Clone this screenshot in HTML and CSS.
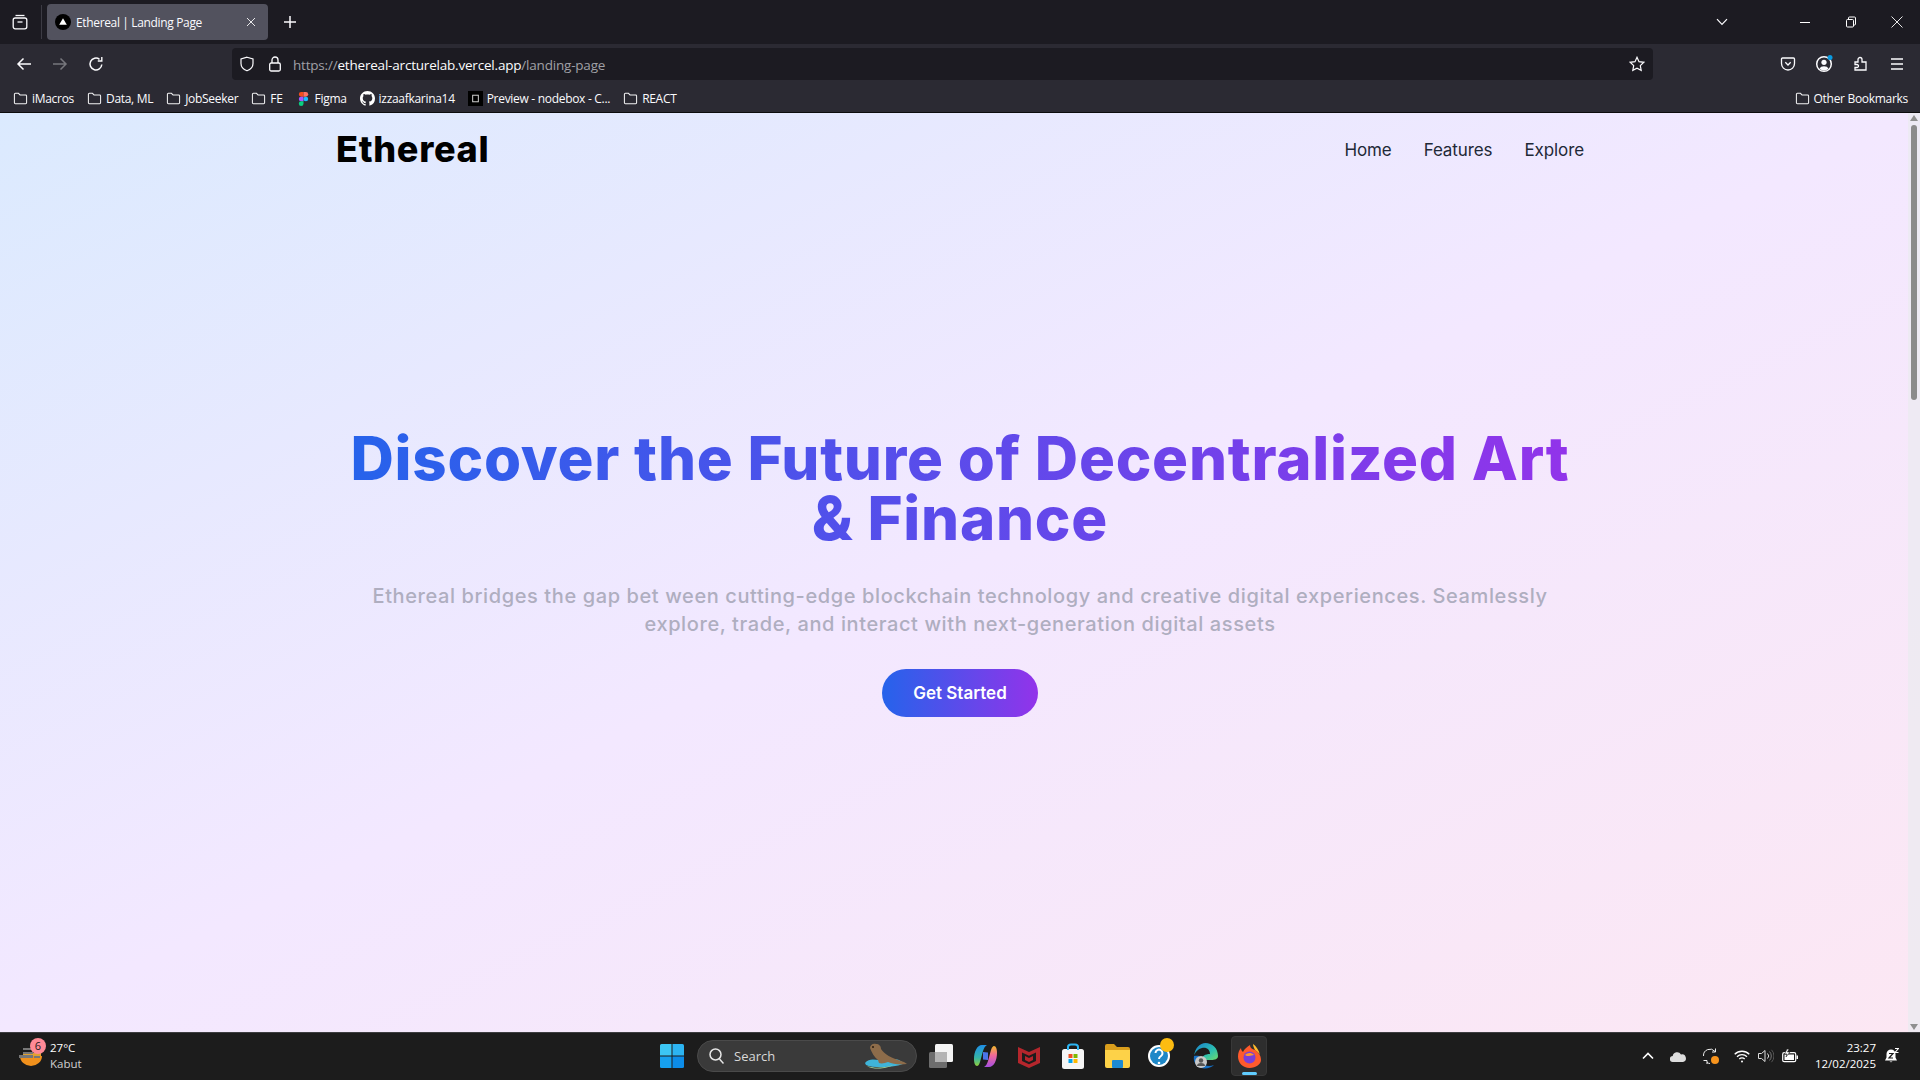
FILE: index.html
```html
<!DOCTYPE html>
<html lang="en">
<head>
    <meta charset="UTF-8">
    <meta name="viewport" content="width=device-width, initial-scale=1.0">
    <title>Ethereal | Landing Page</title>
    <link rel="stylesheet" href="styles.css">
</head>
<body>

<svg class="sprite" xmlns="http://www.w3.org/2000/svg">
    <symbol id="folder" viewBox="0 0 16 16">
        <path d="M1.5 3.5a1 1 0 0 1 1-1h3.3l1.7 1.7h6a1 1 0 0 1 1 1v7.3a1 1 0 0 1-1 1h-11a1 1 0 0 1-1-1z" fill="none" stroke="#f2f2f4" stroke-width="1.1"/>
    </symbol>
    <linearGradient id="copilotLeft" x1="0" y1="0" x2="0" y2="1">
        <stop offset="0" stop-color="#1f8fe8"/>
        <stop offset="0.6" stop-color="#35b5a8"/>
        <stop offset="1" stop-color="#8fd03c"/>
    </linearGradient>
    <linearGradient id="copilotRight" x1="0" y1="0" x2="0" y2="1">
        <stop offset="0" stop-color="#f4b82c"/>
        <stop offset="0.45" stop-color="#f0689a"/>
        <stop offset="1" stop-color="#a64fe0"/>
    </linearGradient>
    <linearGradient id="edgeTop" x1="0" y1="0" x2="1" y2="1">
        <stop offset="0" stop-color="#1a7fd0"/>
        <stop offset="0.6" stop-color="#2cc0b0"/>
        <stop offset="1" stop-color="#6fdc6a"/>
    </linearGradient>
</svg>

<div class="browser">
    <!-- Tab strip -->
    <div class="tabstrip">
        <div class="tabs-all">
            <svg width="16" height="16" viewBox="0 0 16 16" fill="none" stroke="#fbfbfe" stroke-width="1.3"><path d="M3.5 1.5h9"/><rect x="1.2" y="4" width="13.6" height="10.8" rx="2"/><path d="M5.5 8h5"/></svg>
        </div>
        <div class="tab">
            <svg class="tab-icon" width="16" height="16" viewBox="0 0 16 16"><circle cx="8" cy="8" r="8" fill="#000"/><path d="M8 4.2l3.8 6.6H4.2z" fill="#fff"/></svg>
            <span class="tab-title">Ethereal | Landing Page</span>
            <svg class="tab-close" width="10" height="10" viewBox="0 0 10 10" stroke="#e8e8ea" stroke-width="1"><path d="M1 1l8 8M9 1l-8 8"/></svg>
        </div>
        <svg class="tab-new" width="14" height="14" viewBox="0 0 14 14" stroke="#fbfbfe" stroke-width="1.5"><path d="M7 1v12M1 7h12"/></svg>
        <svg class="tab-list" width="12" height="8" viewBox="0 0 12 8" fill="none" stroke="#fbfbfe" stroke-width="1.2"><path d="M1 1.2l5 5.3 5-5.3"/></svg>
        <div class="win-controls">
            <svg width="12" height="12" viewBox="0 0 12 12" stroke="#fff" stroke-width="1"><path d="M1 6.5h10"/></svg>
            <svg width="12" height="12" viewBox="0 0 12 12" fill="none" stroke="#fff" stroke-width="1"><rect x="1.5" y="3.5" width="7" height="7.5" rx="1"/><path d="M3.5 3.5V2a1 1 0 0 1 1-1h5a1 1 0 0 1 1 1v6a1 1 0 0 1-1 1H8.5"/></svg>
            <svg width="12" height="12" viewBox="0 0 12 12" stroke="#fff" stroke-width="0.9"><path d="M.5.5l11 11M11.5.5l-11 11"/></svg>
        </div>
    </div>

    <!-- Navigation bar -->
    <div class="navbar">
        <div class="nav-btns">
            <svg width="16" height="16" viewBox="0 0 16 16" fill="none" stroke="#fbfbfe" stroke-width="1.5"><path d="M15 8H2M7.5 2.5L2 8l5.5 5.5"/></svg>
            <svg width="16" height="16" viewBox="0 0 16 16" fill="none" stroke="#77777d" stroke-width="1.5"><path d="M1 8h13M8.5 2.5L14 8l-5.5 5.5"/></svg>
            <svg width="16" height="16" viewBox="0 0 16 16" fill="none" stroke="#fbfbfe" stroke-width="1.5"><path d="M13.8 8.5A5.9 5.9 0 1 1 11.5 3.3"/><path d="M13.8 1v4h-4" stroke-width="1.4"/></svg>
        </div>
        <div class="urlbar">
            <svg width="16" height="16" viewBox="0 0 16 16" fill="none" stroke="#fbfbfe" stroke-width="1.2"><path d="M8 1.2l6 1.8v4.5c0 3.5-2.5 6-6 7.3-3.5-1.3-6-3.8-6-7.3V3z"/></svg>
            <svg class="url-lock" width="14" height="16" viewBox="0 0 14 16" fill="none" stroke="#fbfbfe" stroke-width="1.3"><rect x="1.7" y="7" width="10.6" height="8" rx="1.5"/><path d="M4 7V4a3 3 0 0 1 6 0v3"/></svg>
            <span class="url-text"><span class="url-dim">https://</span>ethereal-arcturelab.vercel.app<span class="url-dim">/landing-page</span></span>
            <svg class="url-star" width="16" height="16" viewBox="0 0 16 16" fill="none" stroke="#fbfbfe" stroke-width="1.2"><path d="M8 1.3l2 4.4 4.8.6-3.5 3.3.9 4.8L8 12.1l-4.2 2.3.9-4.8-3.500-3.300L6 5.700z"/></svg>
        </div>
        <div class="tool-btns">
            <svg width="16" height="16" viewBox="0 0 16 16" fill="none" stroke="#fbfbfe" stroke-width="1.3"><path d="M2.5 2h11a1 1 0 0 1 1 1v4.5a6.5 6.5 0 0 1-13 0V3a1 1 0 0 1 1-1z"/><path d="M5.3 6.300L8 9l2.700-2.700"/></svg>
            <svg class="tool-profile" width="18" height="18" viewBox="0 0 18 18"><circle cx="9" cy="9" r="7.3" fill="none" stroke="#fbfbfe" stroke-width="1.5"/><circle cx="9" cy="7.3" r="2.6" fill="#fbfbfe"/><path d="M4.5 13.500a4.800 3.600 0 0 1 9 0 6 6 0 0 1-9 0z" fill="#fbfbfe"/><circle cx="15" cy="2.5" r="2.5" fill="#0a9ae0"/></svg>
            <svg width="16" height="16" viewBox="0 0 16 16" fill="none" stroke="#fbfbfe" stroke-width="1.3"><path d="M2 6h3V3.500a2 2 0 0 1 4 0V6h4v8H2v-2.500h2a1.500 1.500 0 0 0 0-3H2z"/></svg>
            <svg width="16" height="16" viewBox="0 0 16 16" stroke="#fbfbfe" stroke-width="1.3"><path d="M2 3h12M2 8h12M2 13h12"/></svg>
        </div>
    </div>

    <!-- Bookmarks -->
    <div class="bookmarks">
        <a class="bm"><svg class="bm-icon"><use href="#folder"/></svg>iMacros</a>
        <a class="bm"><svg class="bm-icon"><use href="#folder"/></svg>Data, ML</a>
        <a class="bm"><svg class="bm-icon"><use href="#folder"/></svg>JobSeeker</a>
        <a class="bm"><svg class="bm-icon"><use href="#folder"/></svg>FE</a>
        <a class="bm">
            <svg class="bm-icon" viewBox="0 0 16 16"><path d="M3 1h5v5H5.500a2.500 2.500 0 0 1 0-5z" fill="#f24e1e"/><path d="M8 1h2.500a2.500 2.500 0 0 1 0 5H8z" fill="#ff7262"/><path d="M8 6H5.500a2.500 2.500 0 0 0 0 5H8z" fill="#a259ff"/><circle cx="10.5" cy="8.5" r="2.5" fill="#1abcfe"/><path d="M5.500 11H8v2.500a2.500 2.500 0 1 1-2.500-2.500z" fill="#0acf83"/></svg>
            <span>Figma</span>
        </a>
        <a class="bm">
            <svg class="bm-icon" viewBox="0 0 16 16"><path fill="#fff" d="M8 0C3.580 0 0 3.580 0 8c0 3.540 2.290 6.530 5.470 7.590.4.070.55-.17.55-.38 0-.19-.01-.82-.01-1.490-2.010.37-2.530-.49-2.690-.94-.09-.23-.48-.94-.82-1.130-.28-.15-.68-.52-.01-.53.630-.01 1.080.58 1.230.82.720 1.210 1.870.870 2.330.660.070-.520.280-.870.510-1.070-1.780-.200-3.640-.890-3.640-3.950 0-.870.310-1.590.820-2.150-.080-.200-.360-1.020.080-2.120 0 0 .670-.210 2.200.820.640-.180 1.320-.270 2-.270s1.360.090 2 .270c1.530-1.040 2.200-.820 2.200-.820.440 1.100.160 1.920.080 2.120.510.560.820 1.270.820 2.150 0 3.070-1.870 3.750-3.650 3.950.290.250.540.730.540 1.480 0 1.070-.010 1.930-.010 2.200 0 .210.150.460.550.380A8.010 8.010 0 0 0 16 8c0-4.420-3.580-8-8-8z"/></svg>
            <span>izzaafkarina14</span>
        </a>
        <a class="bm">
            <svg class="bm-icon" viewBox="0 0 16 16"><rect width="16" height="16" fill="#000"/><rect x="5" y="4.5" width="6" height="7" fill="none" stroke="#ddd" stroke-width="1"/></svg>
            <span>Preview - nodebox - C...</span>
        </a>
        <a class="bm"><svg class="bm-icon"><use href="#folder"/></svg>REACT</a>
        <a class="bm bm-other"><svg class="bm-icon"><use href="#folder"/></svg>Other Bookmarks</a>
    </div>
</div>

<!-- Landing page -->
<div class="page">
    <header class="site-header">
        <div class="logo">Ethereal</div>
        <nav class="site-nav">
            <a>Home</a>
            <a>Features</a>
            <a>Explore</a>
        </nav>
    </header>
    <section class="hero">
        <h1>Discover the Future of Decentralized Art &amp; Finance</h1>
        <p>Ethereal bridges the gap bet ween cutting-edge blockchain technology and creative digital experiences. Seamlessly explore, trade, and interact with next-generation digital assets</p>
        <a class="cta">Get Started</a>
    </section>
    <div class="scrollbar">
        <div class="scroll-up"></div>
        <div class="scroll-thumb"></div>
        <div class="scroll-down"></div>
    </div>
</div>

<!-- Windows taskbar -->
<div class="taskbar">
    <div class="weather">
        <svg class="weather-icon" width="24" height="22" viewBox="0 0 24 22"><path d="M1 11h22a11 10 0 0 1-22 0z" fill="#f0901c"/><path d="M4 8h18v3H4z" fill="#e0a030"/><path d="M0 10h14v3H0zM4 3h8v2H4zM4 7h10v2H4zM15 11h6v2h-6z" fill="#777"/></svg>
        <span class="weather-badge">6</span>
        <div class="weather-text">
            <div>27°C</div>
            <div class="weather-sub">Kabut</div>
        </div>
    </div>

    <div class="task-center">
        <div class="task-slot">
            <svg width="24" height="24" viewBox="0 0 24 24"><path d="M1.500 0h10v11.500H0V1.500A1.500 1.500 0 0 1 1.500 0z" fill="#3cc6f4"/><path d="M12.500 0h10A1.500 1.500 0 0 1 24 1.500v10H12.500z" fill="#2cb4f2"/><path d="M0 12.500h11.500V24h-10A1.500 1.500 0 0 1 0 22.500z" fill="#16a0ee"/><path d="M12.500 12.500H24v10a1.500 1.500 0 0 1-1.500 1.500h-10z" fill="#0c8ce8"/></svg>
        </div>
        <div class="task-search">
            <svg width="15" height="16" viewBox="0 0 15 16" fill="none" stroke="#e6e6e6" stroke-width="1.5"><circle cx="6.5" cy="6.5" r="5.5"/><path d="M10.5 11l4 4.5"/></svg>
            <span>Search</span>
            <svg class="search-art" width="44" height="26" viewBox="0 0 44 26"><path d="M1 20c4-5 10-3 14-3s14-2 20 0l5 3c-4 4-30 6-38 2z" fill="#3fb4d8"/><path d="M3 23c8 3 18 2 26-1-6 4-20 5-26 1z" fill="#a8e0a0"/><path d="M6 5c0-3 3-5 6-4 3 0 5 2 5 5 3 5 10 9 23 13l3 2c-8 1-14 0-19-2-3 1-6 2-9 1l-1-3c-4-3-6-7-8-12z" fill="#8d6c4a"/><circle cx="9" cy="4" r="1" fill="#2a1c10"/></svg>
        </div>
        <div class="task-slot">
            <svg width="24" height="24" viewBox="0 0 24 24"><rect x="0" y="8" width="18" height="16" rx="1.5" fill="#6d6d6d"/><rect x="6" y="0" width="18" height="18" rx="1.5" fill="#f4f4f4"/><rect x="6" y="8" width="12" height="10" fill="#b4b4b4"/></svg>
        </div>
        <div class="task-slot">
            <svg width="23" height="24" viewBox="0 0 23 24"><path d="M8 1h5c-2 1-3 3-4 6l-3 11c-1 3-2 4-3 4-2 0-3-3-3-7C0 8 3 1 8 1z" fill="url(#copilotLeft)"/><path d="M15 23h-5c2-1 3-3 4-6l3-11c1-3 2-4 3-4 2 0 3 3 3 7 0 7-3 14-8 14z" fill="url(#copilotRight)"/><path d="M9 8l5 .5L14 16l-5-.5z" fill="#4a74e8"/></svg>
        </div>
        <div class="task-slot">
            <svg width="22" height="24" viewBox="0 0 22 24"><path d="M0 3l11 5 11-5v16l-11 5L0 19z" fill="#b5262c"/><path d="M4 8.5l7 3.200 7-3.200V17l-7 3.200L4 17z" fill="#1c1c1c"/><path d="M7 12l4 2 4-2v4l-4 2-4-2z" fill="#b5262c"/></svg>
        </div>
        <div class="task-slot">
            <svg width="24" height="26" viewBox="0 0 24 26"><rect x="1" y="6" width="22" height="20" rx="2.5" fill="#f6f6f6"/><path d="M7 7V4a3 2.500 0 0 1 3-2.500h4A3 2.500 0 0 1 17 4v3" fill="none" stroke="#2cb4f2" stroke-width="2"/><rect x="7.500" y="11" width="4" height="4" fill="#f25022"/><rect x="12.500" y="11" width="4" height="4" fill="#7fba00"/><rect x="7.500" y="16" width="4" height="4" fill="#00a4ef"/><rect x="12.500" y="16" width="4" height="4" fill="#ffb900"/></svg>
        </div>
        <div class="task-slot">
            <svg width="25" height="24" viewBox="0 0 25 24"><path d="M0 2a2 2 0 0 1 2-2h7l3 3h11a2 2 0 0 1 2 2v3H0z" fill="#d99e1c"/><path d="M0 6h25v16a2 2 0 0 1-2 2H2a2 2 0 0 1-2-2z" fill="#fdd248"/><rect x="7" y="16" width="11" height="8" rx="1" fill="#1c8ad2"/></svg>
        </div>
        <div class="task-slot">
            <svg class="task-over" width="26" height="30" viewBox="0 0 26 30"><circle cx="11" cy="18" r="11" fill="#fff"/><circle cx="11" cy="18" r="9" fill="#1e88c8"/><path d="M7.5 15a3.500 3.500 0 1 1 5.500 3c-1.500 1-2 1.500-2 3" fill="none" stroke="#fff" stroke-width="2"/><circle cx="11" cy="25" r="1.3" fill="#fff"/><circle cx="19" cy="7" r="7" fill="#fdbc11"/></svg>
        </div>
        <div class="task-slot">
            <svg width="25" height="26" viewBox="0 0 25 26"><path d="M12.5 0C19 0 25 5 25 13c0 3-3 4-7 4H9c0-4 3-6 8-6 0-4-3-7-8-6-4 1-7 4-8 8C2 5 7 0 12.500 0z" fill="url(#edgeTop)"/><path d="M1 13c-1 6 2 10 7 12 5 1 10 0 13-3-5 2-10 1-12-3-1-2 0-3 0-2-1-3-2-5-8-4z" fill="#1570c6"/><circle cx="8" cy="19" r="6" fill="#c8c8c8"/><circle cx="8" cy="17.5" r="2.2" fill="#555"/><path d="M4 23a4 3 0 0 1 8 0z" fill="#555"/></svg>
        </div>
        <div class="task-slot task-active">
            <svg width="23" height="24" viewBox="0 0 23 24"><path d="M11.5 24C5 24 0 19 0 12.500 0 9 1 6 3 4c0 2 1 3 2 4 1-3 4-5 7-7 0 3 2 4 5 5 3 2 6 5 6 10 0 4-5 8-11.500 8z" fill="#ff5a2c"/><path d="M17 6c-1-2-2-4-2-6 3 2 6 6 7 11-1-2-3-4-5-5z" fill="#ffbb2c"/><circle cx="11.5" cy="13.5" r="6" fill="#7a3fd8"/><path d="M7 11c2-2 6-3 9 0-2 0-3 1-5 1-1 0-3 0-4-1z" fill="#ff9a2c"/></svg>
            <span class="task-underline"></span>
        </div>
    </div>

    <div class="tray">
        <svg class="tray-chevron" width="12" height="8" viewBox="0 0 12 8" fill="none" stroke="#fff" stroke-width="1.6"><path d="M1 6.500l5-5 5 5"/></svg>
        <svg width="16" height="11" viewBox="0 0 16 11"><path d="M3 11a3 3 0 0 1-.3-6A4.500 4.500 0 0 1 11 3.500 3.800 3.800 0 0 1 13 11z" fill="#ddd"/></svg>
        <svg width="18" height="17" viewBox="0 0 18 17" fill="none" stroke="#eee" stroke-width="1"><path d="M1.5 8A6.500 6.500 0 0 1 13 3.500"/><path d="M13.5 .5v3.500H10"/><path d="M1.5 12.500h3.500V16"/><path d="M5 14.500a6 6 0 0 0 3 1"/><circle cx="13" cy="12" r="4" fill="#f7941d" stroke="none"/></svg>
        <div class="tray-net">
            <svg width="16" height="13" viewBox="0 0 16 13" fill="none" stroke="#fff" stroke-width="1.3"><path d="M.7 4.200a10.500 10.500 0 0 1 14.600 0M3 6.700a7.200 7.200 0 0 1 10 0M5.300 9a3.800 3.800 0 0 1 5.400 0"/><circle cx="8" cy="11.5" r="1" fill="#fff" stroke="none"/></svg>
            <svg width="16" height="14" viewBox="0 0 16 14" fill="none" stroke="#ddd" stroke-width="1"><path d="M.5 4.500h3L7 1.500v11l-3.500-3h-3z"/><path d="M9.500 4.500a3.500 3.500 0 0 1 0 5"/><path d="M11.500 2.500a6.500 6.500 0 0 1 0 9" stroke="#777"/><path d="M13.500 .8a9 9 0 0 1 0 12.400" stroke="#555"/></svg>
            <svg width="16" height="14" viewBox="0 0 16 14"><rect x=".7" y="3.7" width="13" height="9" rx="1.5" fill="none" stroke="#fff" stroke-width="1.2"/><rect x="2.5" y="5.5" width="9.5" height="5.5" fill="#fff"/><rect x="14.5" y="6.5" width="1.5" height="3.5" fill="#fff"/><path d="M5 0L2.500 5h2.500l-1 3 4-5H5.500l1.500-3z" fill="#fff" stroke="#1c1c1c" stroke-width=".6"/></svg>
        </div>
        <div class="clock">
            <div>23:27</div>
            <div>12/02/2025</div>
        </div>
        <svg class="tray-notif" width="15" height="16" viewBox="0 0 15 16"><path d="M7 1.500a4.500 4.500 0 0 1 4.500 4.500v3.500l1.500 3H1l1.500-3V6A4.500 4.500 0 0 1 7 1.500z" fill="#fff"/><path d="M5.500 13.500a1.800 1.800 0 0 0 3 0z" fill="#fff"/><path d="M5 5.500h4L5 10h4" fill="none" stroke="#1c1c1c" stroke-width="1.2"/><path d="M11 .5h3.500L11 4.500h3.500" fill="none" stroke="#fff" stroke-width="1.1"/></svg>
    </div>
</div>

</body>
</html>
```

FILE: styles.css
```css
/* Base */
* {
    box-sizing: border-box;
}
html, body {
    height: 100%;
}
body {
    margin: 0;
    display: flex;
    flex-direction: column;
    overflow: hidden;
    font-family: "Open Sans", sans-serif;
    background: #1c1b22;
}
.sprite {
    position: absolute;
    width: 0;
    height: 0;
}

/* Browser chrome */
.browser {
    height: 113px;
    flex: none;
    color: #fbfbfe;
    background: #2b2a33;
    border-bottom: 1px solid #0c0c0d;
}
.tabstrip {
    height: 44px;
    background: #1c1b22;
    display: flex;
    align-items: center;
}
.tabs-all {
    width: 42px;
    height: 34px;
    padding-left: 12px;
    display: flex;
    align-items: center;
    border-right: 1px solid #3c3b44;
    flex: none;
}
.tab {
    width: 221px;
    height: 36px;
    margin-left: 5px;
    padding: 0 12px 0 8px;
    display: flex;
    align-items: center;
    background: #52525e;
    border-radius: 4px;
    flex: none;
}
.tab-icon {
    margin-right: 5px;
    flex: none;
}
.tab-title {
    flex: 1;
    font-size: 12px;
    white-space: nowrap;
    letter-spacing: -0.35px;
}
.tab-new {
    margin-left: 15px;
    flex: none;
}
.tab-list {
    margin-left: auto;
    margin-right: 37px;
    flex: none;
}
.win-controls {
    width: 138px;
    margin-right: 17px;
    display: flex;
    gap: 34px;
    justify-content: flex-end;
    flex: none;
}
.navbar {
    height: 40px;
    display: flex;
    align-items: center;
}
.nav-btns {
    width: 232px;
    padding-left: 16px;
    display: flex;
    gap: 20px;
    flex: none;
}
.urlbar {
    width: 1421px;
    height: 32px;
    padding: 0 8px 0 7px;
    display: flex;
    align-items: center;
    background: #1c1b22;
    border-radius: 4px;
    flex: none;
}
.urlbar > svg {
    flex: none;
}
.url-lock {
    margin-left: 13px;
}
.url-text {
    margin-left: 11px;
    padding-top: 2px;
    font-size: 13.5px;
    letter-spacing: -0.2px;
    color: #fbfbfe;
    white-space: nowrap;
}
.url-dim {
    color: #a0a0a6;
}
.url-star {
    margin-left: auto;
}
.tool-btns {
    margin-left: 127px;
    display: flex;
    align-items: center;
    gap: 20px;
}
.tool-profile {
    margin: 0 0 0 -1px;
}
.bookmarks {
    height: 28px;
    padding: 0 12px 0 13px;
    display: flex;
    align-items: center;
    gap: 13px;
    font-size: 12px;
    letter-spacing: -0.3px;
}
.bm {
    display: flex;
    align-items: center;
    gap: 4px;
    white-space: nowrap;
}
.bm-icon {
    width: 15px;
    height: 15px;
    flex: none;
}
.bm-other {
    margin-left: auto;
}

/* Landing page */
.page {
    flex: 1;
    position: relative;
    background: linear-gradient(to bottom right, #dbeafe, #f3e8ff 50%, #fce7f3);
    overflow: hidden;
}
.site-header {
    width: 1280px;
    height: 72px;
    margin: 0 auto;
    padding: 0 16px;
    display: flex;
    align-items: center;
    justify-content: space-between;
    font-family: Inter, sans-serif;
}
.logo {
    font-size: 36px;
    font-weight: 800;
    letter-spacing: 0.7px;
    color: #000;
}
.site-nav {
    display: flex;
    gap: 32px;
    padding-top: 1px;
    font-size: 17px;
    letter-spacing: -0.1px;
    color: #1f2937;
}
.hero {
    width: 1280px;
    margin: 0 auto;
    padding: 243px 16px 0;
    display: flex;
    flex-direction: column;
    align-items: center;
    text-align: center;
    font-family: Inter, sans-serif;
}
.hero h1 {
    margin: 0;
    font-size: 60px;
    line-height: 60px;
    font-weight: 800;
    letter-spacing: 0.75px;
    background: linear-gradient(90deg, #2563eb, #9333ea);
    -webkit-background-clip: text;
    background-clip: text;
    color: transparent;
}
.hero p {
    max-width: 1216px;
    margin: 34px 0 0;
    font-size: 20px;
    line-height: 28px;
    font-weight: 500;
    letter-spacing: 0.6px;
    color: #afaec0;
}
.cta {
    width: 156px;
    height: 48px;
    margin-top: 31px;
    display: flex;
    align-items: center;
    justify-content: center;
    border-radius: 999px;
    font-size: 17px;
    font-weight: 600;
    color: #fff;
    background: linear-gradient(90deg, #2563eb, #9333ea);
}
.scrollbar {
    position: absolute;
    top: 0;
    right: 0;
    bottom: 0;
    width: 12px;
    padding: 2px 0;
    display: flex;
    flex-direction: column;
    align-items: center;
    background: rgba(235, 235, 240, 0.75);
}
.scroll-thumb {
    width: 6px;
    height: 275px;
    margin-top: 4px;
    background: #8b8b8b;
    border-radius: 3px;
}
.scroll-up,
.scroll-down {
    width: 0;
    height: 0;
    border-left: 4px solid transparent;
    border-right: 4px solid transparent;
}
.scroll-up {
    border-bottom: 6px solid #8f8f8f;
}
.scroll-down {
    margin-top: auto;
    border-top: 6px solid #8f8f8f;
}

/* Taskbar */
.taskbar {
    height: 48px;
    flex: none;
    padding-bottom: 1px;
    display: flex;
    align-items: center;
    background: #1c1c1c;
    border-top: 1px solid #3d3d40;
    color: #fff;
    font-size: 11.5px;
}
.weather {
    width: 650px;
    padding-left: 19px;
    display: flex;
    align-items: center;
    position: relative;
    flex: none;
}
.weather-icon {
    flex: none;
}
.weather-badge {
    position: absolute;
    left: 30px;
    top: -2px;
    width: 16px;
    height: 16px;
    border-radius: 50%;
    background: #ff8a96;
    color: #1c1c1c;
    font-size: 11px;
    line-height: 16px;
    text-align: center;
}
.weather-text {
    margin-left: 7px;
    line-height: 16px;
    font-weight: 500;
}
.weather-sub {
    font-weight: 400;
    color: #d0d0d0;
}
.task-center {
    display: flex;
    align-items: center;
    flex: none;
}
.task-slot {
    width: 44px;
    height: 40px;
    display: flex;
    align-items: center;
    justify-content: center;
    position: relative;
    flex: none;
}
.task-search {
    width: 220px;
    height: 32px;
    margin: 0 2px 0 3px;
    padding: 0 8px 0 11px;
    display: flex;
    align-items: center;
    gap: 10px;
    border-radius: 16px;
    background: #3a3a3a;
    border: 1px solid #4a4a4a;
    font-size: 13px;
    color: #d8d8d8;
    flex: none;
}
.search-art {
    margin-left: auto;
}
.task-over {
    margin-top: -6px;
}
.task-active {
    width: 36px;
    margin-left: 4px;
    background: #2e2e2e;
    border-radius: 4px;
    border: 1px solid #383838;
}
.task-underline {
    position: absolute;
    bottom: 0;
    left: 10px;
    width: 15px;
    height: 3px;
    border-radius: 2px;
    background: #60cdff;
}
.tray {
    margin-left: auto;
    padding-right: 21px;
    display: flex;
    align-items: center;
    gap: 16px;
}
.tray-net {
    margin-left: -2px;
    display: flex;
    align-items: center;
    gap: 8px;
}
.clock {
    margin-left: 1px;
    text-align: right;
    line-height: 16px;
}
.tray-notif {
    margin-left: -8px;
}
```
